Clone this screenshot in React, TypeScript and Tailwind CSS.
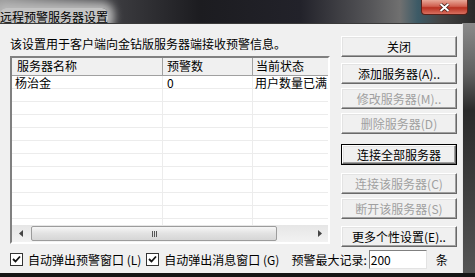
import type { ReactNode } from "react"

const FONT =
  '"Noto Sans CJK SC", "Liberation Sans", sans-serif'

const BUTTONS: { label: string; disabled?: boolean; primary?: boolean; mt: string }[] = [
  { label: "关闭", mt: "mt-0" },
  { label: "添加服务器(A)..", mt: "mt-[6px]" },
  { label: "修改服务器(M)..", disabled: true, mt: "mt-[4px]" },
  { label: "删除服务器(D)", disabled: true, mt: "mt-[4px]" },
  { label: "连接全部服务器", primary: true, mt: "mt-[10px]" },
  { label: "连接该服务器(C)", disabled: true, mt: "mt-[8px]" },
  { label: "断开该服务器(S)", disabled: true, mt: "mt-[4px]" },
  { label: "更多个性设置(E)..", mt: "mt-[7px]" },
]

function WinButton({
  label,
  disabled,
  primary,
  className,
}: {
  label: string
  disabled?: boolean
  primary?: boolean
  className?: string
}) {
  return (
    <div
      className={`${className} h-[21px] w-[116px] ${primary ? "border border-black" : ""}`}
    >
      <div
        className={`flex h-full w-full items-center justify-center border border-t-white border-l-white border-r-[#696969] border-b-[#696969] bg-[#f0f0f0] text-[12px] leading-[14px] shadow-[inset_-1px_-1px_0_#a0a0a0,inset_1px_1px_0_#e3e3e3] ${
          disabled ? "text-[#a0a0a0]" : "text-black"
        }`}
      >
        {label}
      </div>
    </div>
  )
}

function CheckBox({ children }: { children: ReactNode }) {
  return (
    <div className="flex items-center gap-[5px]">
      <div className="flex h-[13px] w-[13px] items-center justify-center border border-[#333] bg-white">
        <svg width="9" height="9" viewBox="0 0 9 9">
          <path d="M1 4 L3.5 6.5 L8 1.5" stroke="#111" strokeWidth="1.8" fill="none" />
        </svg>
      </div>
      <span className="text-[12px] leading-[14px] text-black">{children}</span>
    </div>
  )
}

function ListView() {
  const rows = Array.from({ length: 11 })
  return (
    <div className="mt-[5px] flex h-[188px] w-[320px] flex-col border-2 border-t-[#808080] border-l-[#808080] border-r-white border-b-white bg-white">
      <div className="grid h-[18px] shrink-0 grid-cols-[151px_90px_1fr] bg-[#f0f0f0] text-[12px] leading-[14px]">
        <div className="border-r border-b border-r-[#a0a0a0] border-b-[#a0a0a0] pl-[5px] pt-[1px]">服务器名称</div>
        <div className="border-r border-b border-r-[#a0a0a0] border-b-[#a0a0a0] pl-[4px] pt-[1px]">预警数</div>
        <div className="whitespace-nowrap border-b border-b-[#a0a0a0] pl-[3px] pt-[1px]">当前状态</div>
      </div>
      <div className="flex-1">
        {rows.map((_, i) => (
          <div
            key={i}
            className="grid h-[13px] grid-cols-[151px_90px_1fr] text-[12px] leading-[13px] shadow-[inset_0_-1px_0_#ececec]"
          >
            <div className="pl-[3px] shadow-[inset_-1px_0_0_#ececec]">{i === 0 ? "杨治金" : ""}</div>
            <div className="pl-[4px] shadow-[inset_-1px_0_0_#ececec]">{i === 0 ? "0" : ""}</div>
            <div className="overflow-x-clip whitespace-nowrap pl-[2px]">{i === 0 ? "用户数量已满" : ""}</div>
          </div>
        ))}
        <div className="grid h-[6px] grid-cols-[151px_90px_1fr]">
          <div className="border-r border-r-[#ececec]" />
          <div className="border-r border-r-[#ececec]" />
          <div />
        </div>
      </div>
      <div className="flex h-[17px] shrink-0 items-center bg-[linear-gradient(180deg,#e6e6e6,#f2f2f2)]">
        <div className="flex h-full w-[17px] items-center justify-center">
          <svg width="4" height="7" viewBox="0 0 4 7">
            <path d="M4 0 L0 3.5 L4 7 Z" fill="#444" />
          </svg>
        </div>
        <div className="ml-[2px] flex h-[15px] w-[246px] items-center justify-center rounded-[2px] border border-[#9c9c9c] bg-[linear-gradient(180deg,#f6f6f6,#e2e2e2_50%,#d6d6d6)]">
          <div className="flex gap-[1px]">
            <div className="h-[6px] w-[1px] bg-[#555]" />
            <div className="h-[6px] w-[1px] bg-[#555]" />
            <div className="h-[6px] w-[1px] bg-[#555]" />
          </div>
        </div>
        <div className="flex-1" />
        <div className="flex h-full w-[17px] items-center justify-center">
          <svg width="4" height="7" viewBox="0 0 4 7">
            <path d="M0 0 L4 3.5 L0 7 Z" fill="#444" />
          </svg>
        </div>
      </div>
    </div>
  )
}

export default function App() {
  return (
    <div
      className="flex h-[277px] w-[475px] flex-col overflow-hidden bg-[#1a1a1a]"
      style={{ fontFamily: FONT }}
    >
      {/* title bar */}
      <div className="flex h-[23px] shrink-0 items-start justify-between bg-[linear-gradient(90deg,#9a9a9a_0px,#3a3a3e_120px,#1c1c20_200px,#22222a_300px,#555558_370px,#707070_400px,#3c5a66_418px,#444_440px,#2a2a2a_475px)]">
        <div className="pt-[3px]">
          <span className="rounded-[6px] bg-[#c4c4c4] text-[12px] leading-[14px] text-black shadow-[0_0_8px_6px_#b8b8b8]">
            远程预警服务器设置
          </span>
        </div>
        <div className="mr-[7px] flex h-[15px] w-[47px] items-center justify-center rounded-b-[4px] border border-t-0 border-[#5a2018] bg-[linear-gradient(180deg,#e8a898,#d06050_45%,#b83020_55%,#d87060)]">
          <svg width="11" height="9" viewBox="0 0 11 9">
            <path d="M1.5 1 L9.5 8 M9.5 1 L1.5 8" stroke="#3a1a14" strokeWidth="3.4" />
            <path d="M1.5 1 L9.5 8 M9.5 1 L1.5 8" stroke="#fff" strokeWidth="2" />
          </svg>
        </div>
      </div>

      <div className="flex h-[250px] shrink-0">
        {/* client area */}
        <div className="flex h-full w-[463px] flex-col border-t border-r border-t-[#3a3a3a] border-r-[#e8e8e8] bg-[#f0f0f0] pt-[12px] text-black">
          <div className="flex">
            <div className="ml-[10px] flex w-[320px] flex-col">
              <div className="mt-[1px] text-[12px] leading-[14px]">
                该设置用于客户端向金钻版服务器端接收预警信息。
              </div>
              <ListView />
            </div>
            <div className="ml-[11px] flex flex-col">
              {BUTTONS.map((b) => (
                <WinButton
                  key={b.label}
                  label={b.label}
                  disabled={b.disabled}
                  primary={b.primary}
                  className={b.mt}
                />
              ))}
            </div>
          </div>
          <div className="ml-[10px] mt-[3px] flex items-center">
            <CheckBox>自动弹出预警窗口 (L)</CheckBox>
            <div className="ml-[5px]">
              <CheckBox>自动弹出消息窗口 (G)</CheckBox>
            </div>
            <span className="ml-[12px] text-[12px] leading-[14px]">预警最大记录:</span>
            <div className="ml-[2px] flex h-[19px] w-[58px] items-center border border-t-[#808080] border-l-[#808080] border-r-[#e3e3e3] border-b-[#e3e3e3] bg-white pl-[1px] text-[12px] leading-[14px]">
              200
            </div>
            <span className="ml-[9px] text-[12px] leading-[14px]">条</span>
          </div>
        </div>
        {/* right frame */}
        <div className="h-full flex-1 bg-[linear-gradient(180deg,#8a8a8a,#606060_20%,#2a2a2a_35%,#3a3a3a_60%,#555_100%)]" />
      </div>
      <div className="flex-1 bg-[#151515]" />
    </div>
  )
}
